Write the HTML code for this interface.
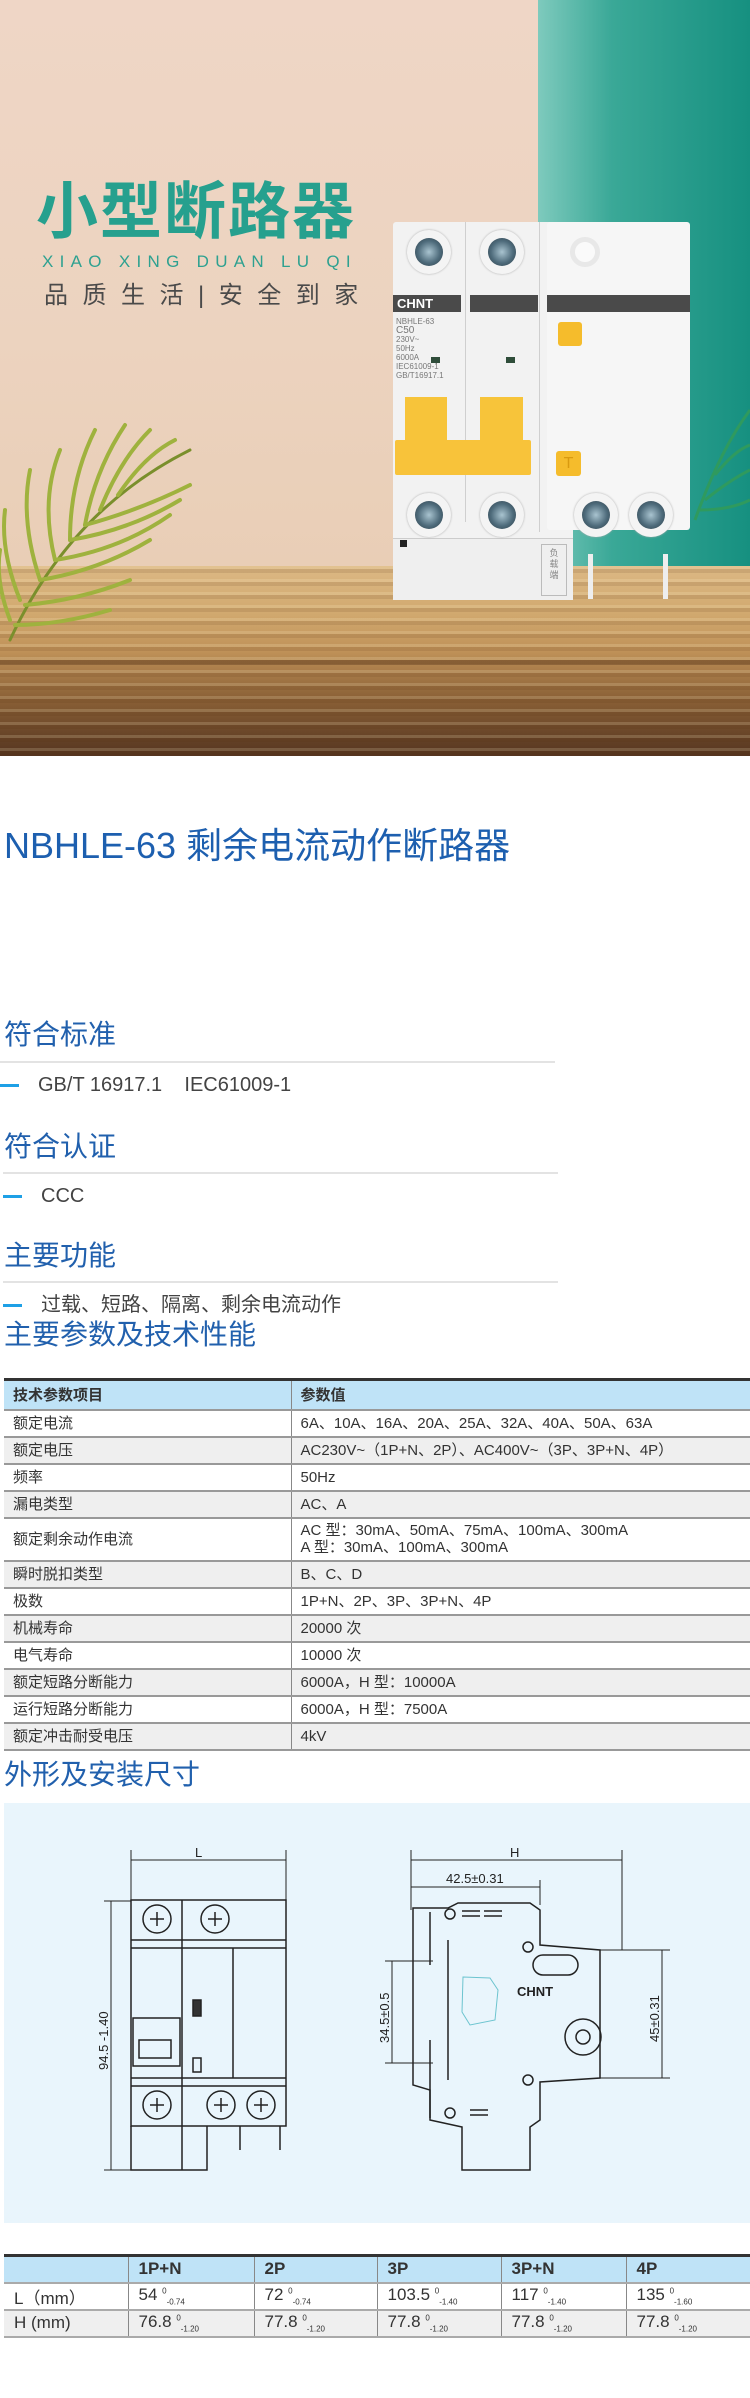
<!DOCTYPE html>
<html><head><meta charset="utf-8">
<style>
*{margin:0;padding:0;box-sizing:border-box}
body{width:750px;height:2398px;background:#fff;position:relative;overflow:hidden;font-family:"Liberation Sans","Noto Sans CJK SC",sans-serif}
.a{position:absolute}
.hd{position:absolute;left:4px;color:#2160ad;font-size:28px;line-height:30px}
.ln{position:absolute;left:0;width:555px;height:2px;background:#e3e3e3}
.it{position:absolute;left:0;font-size:20px;color:#444;line-height:24px}
.it i{display:inline-block;width:19px;height:3px;background:#1ea0e6;vertical-align:middle;margin-right:19px}
table{border-collapse:collapse}
.t1{position:absolute;left:4px;top:1378px;width:746px;border-top:3px solid #333;font-size:15px;color:#333}
.t1 td{border-bottom:2px solid #999;padding:0 0 0 9px;height:27px;line-height:17px}
.t1 td+td{border-left:1px solid #888;padding-left:9px}
.t1 tr.g td{background:#efefef}
.t1 th{background:#bfe3f7;text-align:left;font-weight:bold;padding-left:9px;height:30px;border-bottom:2px solid #999}
.t1 th+th{border-left:1px solid #888}
.t2{position:absolute;left:4px;top:2254px;width:746px;border-top:3px solid #333;font-size:17px;color:#333}
.t2 td,.t2 th{height:27px;border-bottom:2px solid #aaa;padding-left:10px;text-align:left}
.t2 th{background:#bfe3f7;font-weight:bold}
.t2 td+td,.t2 th+th{border-left:1px solid #888}
.t2 tr.g td{background:#efefef}
.t2 sup,.t2 sub{font-size:8px}
.scr{position:absolute;width:44px;height:44px;border-radius:50%;background:#f4f4f4;box-shadow:0 0 2px #aaa}
.scr:after{content:"";position:absolute;left:8px;top:8px;width:28px;height:28px;border-radius:50%;background:radial-gradient(circle,#a9c4d0 0,#4f6c7c 55%,#2b3c46 100%)}
</style></head><body>

<div class="a" style="left:0;top:0;width:540px;height:570px;background:linear-gradient(180deg,#efd6c6 0%,#ecd3bf 60%,#e9ceb6 100%)"></div>
<div class="a" style="left:538px;top:0;width:212px;height:570px;background:linear-gradient(90deg,#7ecabd 0%,#3aa897 35%,#169080 100%)"></div>
<div class="a" style="left:0;top:566px;width:750px;height:190px;background:linear-gradient(180deg,#dcb884 0%,#d1a96f 25%,#bf9158 45%,#8a6036 70%,#553520 100%)"></div>
<div class="a" style="left:0;top:566px;width:750px;height:190px;background:repeating-linear-gradient(180deg,rgba(255,240,200,.18) 0 3px,rgba(80,40,10,.12) 3px 7px,rgba(0,0,0,0) 7px 13px)"></div>
<div class="a" style="left:0;top:660px;width:750px;height:5px;background:rgba(60,30,10,.3)"></div>

<svg class="a" style="left:0;top:390px" width="210" height="260" viewBox="0 0 210 260">
<g stroke="#9fb23e" stroke-width="4" fill="none" stroke-linecap="round">
<path d="M10 250 Q70 120 190 60" stroke="#7a8f2c" stroke-width="3"/>
<path d="M40 190 Q20 130 30 80"/><path d="M55 170 Q40 110 60 60"/><path d="M70 150 Q70 90 95 40"/>
<path d="M85 135 Q95 80 125 35"/><path d="M100 120 Q120 70 150 40"/><path d="M118 105 Q145 65 175 50"/>
<path d="M40 190 Q100 180 150 150"/><path d="M55 170 Q120 160 170 125"/><path d="M70 150 Q130 140 180 110"/>
<path d="M25 215 Q80 210 130 190"/><path d="M15 235 Q60 235 110 220"/><path d="M85 135 Q140 120 190 95"/>
<path d="M20 210 Q0 160 5 120"/><path d="M10 230 Q-5 190 0 160"/>
</g></svg>
<svg class="a" style="left:690px;top:390px" width="60" height="140" viewBox="0 0 60 140">
<g stroke="#2f9a5e" stroke-width="3" fill="none"><path d="M5 130 Q30 60 60 20"/><path d="M15 110 Q40 90 60 80"/><path d="M25 85 Q45 60 60 55"/><path d="M10 120 Q40 120 60 110"/></g></svg>

<div class="a" style="left:36px;top:170px;font-size:62px;font-weight:bold;color:#26a08e;letter-spacing:2px;line-height:72px;font-family:'Noto Sans CJK SC',sans-serif;white-space:nowrap">小型断路器</div>
<div class="a" style="left:42px;top:252px;font-size:17px;color:#2ea190;letter-spacing:6.3px;line-height:20px;white-space:nowrap">XIAO XING DUAN LU QI</div>
<div class="a" style="left:44px;top:281px;font-size:24px;color:#4a4a4a;letter-spacing:14.5px;line-height:30px;white-space:nowrap">品质生活|安全到家</div>

<div class="a" style="left:393px;top:222px;width:299px;height:378px">
 <div class="a" style="left:0;top:0;width:180px;height:378px;background:#f2f2f2;border-radius:3px"></div>
 <div class="a" style="left:154px;top:0;width:143px;height:308px;background:#f6f6f6;border-radius:3px"></div>
 <div class="a" style="left:72px;top:0;width:1px;height:300px;background:#cfcfcf"></div>
 <div class="a" style="left:146px;top:0;width:1px;height:310px;background:#cfcfcf"></div>
 <div class="a" style="left:0;top:73px;width:68px;height:17px;background:#4a4a4a;color:#fff;font-weight:bold;font-size:13px;line-height:17px;padding-left:4px">CHNT</div>
 <div class="a" style="left:77px;top:73px;width:68px;height:17px;background:#4a4a4a"></div>
 <div class="a" style="left:154px;top:73px;width:143px;height:17px;background:#4a4a4a"></div>
 <div class="a" style="left:3px;top:95px;font-size:8px;color:#777;line-height:9px">NBHLE-63<br><span style="font-size:10px">C50</span><br>230V~<br>50Hz<br>6000A<br>IEC61009-1<br>GB/T16917.1</div>
 <div class="a" style="left:38px;top:135px;width:9px;height:6px;background:#2f4d3a"></div>
 <div class="a" style="left:113px;top:135px;width:9px;height:6px;background:#2f4d3a"></div>
 <div class="a" style="left:12px;top:175px;width:42px;height:45px;background:#f7c43a"></div>
 <div class="a" style="left:87px;top:175px;width:43px;height:45px;background:#f7c43a"></div>
 <div class="a" style="left:2px;top:218px;width:136px;height:35px;background:#f8c33a;border-radius:2px"></div>
 <div class="a" style="left:165px;top:100px;width:24px;height:24px;background:#f5bc2c;border-radius:3px"></div>
 <div class="a" style="left:163px;top:229px;width:25px;height:25px;background:#f5bc2c;border-radius:3px;color:#d99a10;font-size:16px;text-align:center;line-height:25px">T</div>
 <div class="a" style="left:195px;top:332px;width:5px;height:45px;background:#eee"></div>
 <div class="a" style="left:270px;top:332px;width:5px;height:45px;background:#eee"></div>
 <div class="a" style="left:0;top:316px;width:180px;height:62px;background:#efefef;border-top:1px solid #ccc"></div>
 <div class="a" style="left:148px;top:322px;width:26px;height:52px;border:1px solid #bbb;font-size:9px;color:#888;text-align:center;line-height:11px;padding-top:3px">负<br>载<br>端</div>
 <div class="a" style="left:7px;top:318px;width:7px;height:7px;background:#222"></div>
</div>
<div class="scr" style="left:407px;top:230px"></div>
<div class="scr" style="left:480px;top:230px"></div>
<div class="a" style="left:570px;top:237px;width:30px;height:30px;border-radius:50%;border:5px solid #e8e8e8;background:#fafafa"></div>
<div class="scr" style="left:407px;top:493px"></div>
<div class="scr" style="left:480px;top:493px"></div>
<div class="scr" style="left:574px;top:493px"></div>
<div class="scr" style="left:629px;top:493px"></div>

<div class="a" style="left:4px;top:826px;font-size:36px;color:#1d5faf;line-height:40px;white-space:nowrap">NBHLE-63 剩余电流动作断路器</div>

<div class="hd" style="top:1020px">符合标准</div>
<div class="ln" style="top:1061px"></div>
<div class="it" style="top:1073px"><i></i>GB/T 16917.1&nbsp;&nbsp;&nbsp;&nbsp;IEC61009-1</div>
<div class="hd" style="top:1132px">符合认证</div>
<div class="ln" style="top:1172px;left:3px"></div>
<div class="it" style="top:1184px;left:3px"><i></i>CCC</div>
<div class="hd" style="top:1241px">主要功能</div>
<div class="ln" style="top:1281px;left:3px"></div>
<div class="it" style="top:1293px;left:3px"><i></i>过载、短路、隔离、剩余电流动作</div>
<div class="hd" style="top:1320px">主要参数及技术性能</div>

<table class="t1">
<tr><th style="width:287px">技术参数项目</th><th>参数值</th></tr>
<tr><td>额定电流</td><td>6A、10A、16A、20A、25A、32A、40A、50A、63A</td></tr>
<tr class="g"><td>额定电压</td><td>AC230V~（1P+N、2P）、AC400V~（3P、3P+N、4P）</td></tr>
<tr><td>频率</td><td>50Hz</td></tr>
<tr class="g"><td>漏电类型</td><td>AC、A</td></tr>
<tr><td style="height:43px">额定剩余动作电流</td><td>AC 型：30mA、50mA、75mA、100mA、300mA<br>A 型：30mA、100mA、300mA</td></tr>
<tr class="g"><td>瞬时脱扣类型</td><td>B、C、D</td></tr>
<tr><td>极数</td><td>1P+N、2P、3P、3P+N、4P</td></tr>
<tr class="g"><td>机械寿命</td><td>20000 次</td></tr>
<tr><td>电气寿命</td><td>10000 次</td></tr>
<tr class="g"><td>额定短路分断能力</td><td>6000A，H 型：10000A</td></tr>
<tr><td>运行短路分断能力</td><td>6000A，H 型：7500A</td></tr>
<tr class="g"><td>额定冲击耐受电压</td><td>4kV</td></tr>
</table>

<div class="hd" style="top:1760px">外形及安装尺寸</div>
<div class="a" style="left:4px;top:1803px;width:746px;height:420px;background:#e9f5fc"></div>
<svg class="a" style="left:0;top:1803px" width="750" height="420" viewBox="0 1803 750 420">
<g stroke="#222" fill="none" stroke-width="1.5">
<path d="M131 1850V1900M286 1850V1900M131 1860H286" stroke-width="1"/>
<path d="M104 1901H131M104 2170H131M111 1901V2170" stroke-width="1"/>
<rect x="131" y="1900" width="155" height="226"/>
<path d="M131 1940H286M131 1948H286M131 2078H286M131 2086H286M182 1900V2126M233 1948V2078"/>
<path d="M131 2126V2170H207V2126M182 2126V2170M240 2126V2150M280 2126V2150"/>
<rect x="133" y="2018" width="47" height="48"/>
<rect x="139" y="2040" width="32" height="18"/>
<rect x="193" y="2000" width="8" height="16" fill="#333"/>
<rect x="193" y="2058" width="8" height="14"/>
<circle cx="157" cy="1919" r="14"/><circle cx="215" cy="1919" r="14"/>
<circle cx="157" cy="2105" r="14"/><circle cx="221" cy="2105" r="14"/><circle cx="261" cy="2105" r="14"/>
<path d="M150 1919H164M157 1912V1926M208 1919H222M215 1912V1926M150 2105H164M157 2098V2112M214 2105H228M221 2098V2112M254 2105H268M261 2098V2112"/>
<path d="M411 1850V1910M622 1850V1950M411 1860H622M411 1887H540M540 1880V1905" stroke-width="1"/>
<path d="M385 1961H433M385 2063H433M392 1961V2063M600 1950H670M600 2078H670M662 1950V2078" stroke-width="1"/>
<path d="M413 1908H448L458 1903H530L540 1910V1945L600 1950V2078L540 2082V2120L530 2127V2170H462V2127L430 2120V2090L413 2085Z"/>
<path d="M430 1912V1965M430 2040V2118M448 1940V2080"/>
<circle cx="583" cy="2037" r="18"/><circle cx="583" cy="2037" r="7"/>
<circle cx="450" cy="1914" r="5"/><circle cx="450" cy="2113" r="5"/>
<circle cx="528" cy="1947" r="5"/><circle cx="528" cy="2080" r="5"/>
<rect x="533" y="1955" width="45" height="20" rx="10"/>
<path d="M462 1911H480M462 1916H480M484 1911H502M484 1916H502M470 2110H488M470 2115H488"/>
<path d="M463 1977L490 1978L498 1990L495 2020L470 2025L462 2012Z" stroke="#6cc4cf" stroke-width="1"/>
</g>
<g font-family="Liberation Sans,sans-serif" font-size="13" fill="#222">
<text x="195" y="1857">L</text>
<text x="510" y="1857">H</text>
<text x="446" y="1883">42.5±0.31</text>
<text x="517" y="1996" font-weight="bold" font-size="13">CHNT</text>
<text transform="translate(108 2070) rotate(-90)">94.5 -1.40</text>
<text transform="translate(389 2043) rotate(-90)">34.5±0.5</text>
<text transform="translate(659 2042) rotate(-90)">45±0.31</text>
</g></svg>

<table class="t2">
<tr><th style="width:124px"></th><th style="width:126px">1P+N</th><th style="width:123px">2P</th><th style="width:124px">3P</th><th style="width:125px">3P+N</th><th>4P</th></tr>
<tr><td>L（mm）</td><td>54 <sup>0</sup><sub>-0.74</sub></td><td>72 <sup>0</sup><sub>-0.74</sub></td><td>103.5 <sup>0</sup><sub>-1.40</sub></td><td>117 <sup>0</sup><sub>-1.40</sub></td><td>135 <sup>0</sup><sub>-1.60</sub></td></tr>
<tr class="g"><td>H (mm)</td><td>76.8 <sup>0</sup><sub>-1.20</sub></td><td>77.8 <sup>0</sup><sub>-1.20</sub></td><td>77.8 <sup>0</sup><sub>-1.20</sub></td><td>77.8 <sup>0</sup><sub>-1.20</sub></td><td>77.8 <sup>0</sup><sub>-1.20</sub></td></tr>
</table>
</body></html>
